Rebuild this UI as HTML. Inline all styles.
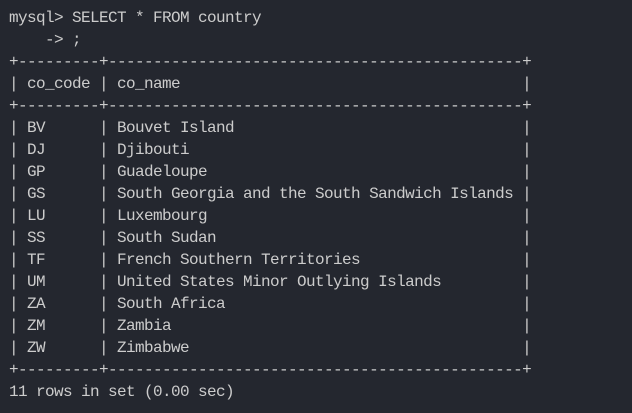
<!DOCTYPE html>
<html><head><style>
html,body{margin:0;padding:0;background:#24272f;width:632px;height:413px;overflow:hidden}
pre{margin:0;padding:7px 0 0 9px;font-family:"Liberation Mono",monospace;font-size:16px;letter-spacing:-0.6px;line-height:22px;color:#cccccc;}
</style></head><body><pre>mysql&gt; SELECT * FROM country
    -&gt; ;
+---------+----------------------------------------------+
| co_code | co_name                                      |
+---------+----------------------------------------------+
| BV      | Bouvet Island                                |
| DJ      | Djibouti                                     |
| GP      | Guadeloupe                                   |
| GS      | South Georgia and the South Sandwich Islands |
| LU      | Luxembourg                                   |
| SS      | South Sudan                                  |
| TF      | French Southern Territories                  |
| UM      | United States Minor Outlying Islands         |
| ZA      | South Africa                                 |
| ZM      | Zambia                                       |
| ZW      | Zimbabwe                                     |
+---------+----------------------------------------------+
11 rows in set (0.00 sec)</pre></body></html>
